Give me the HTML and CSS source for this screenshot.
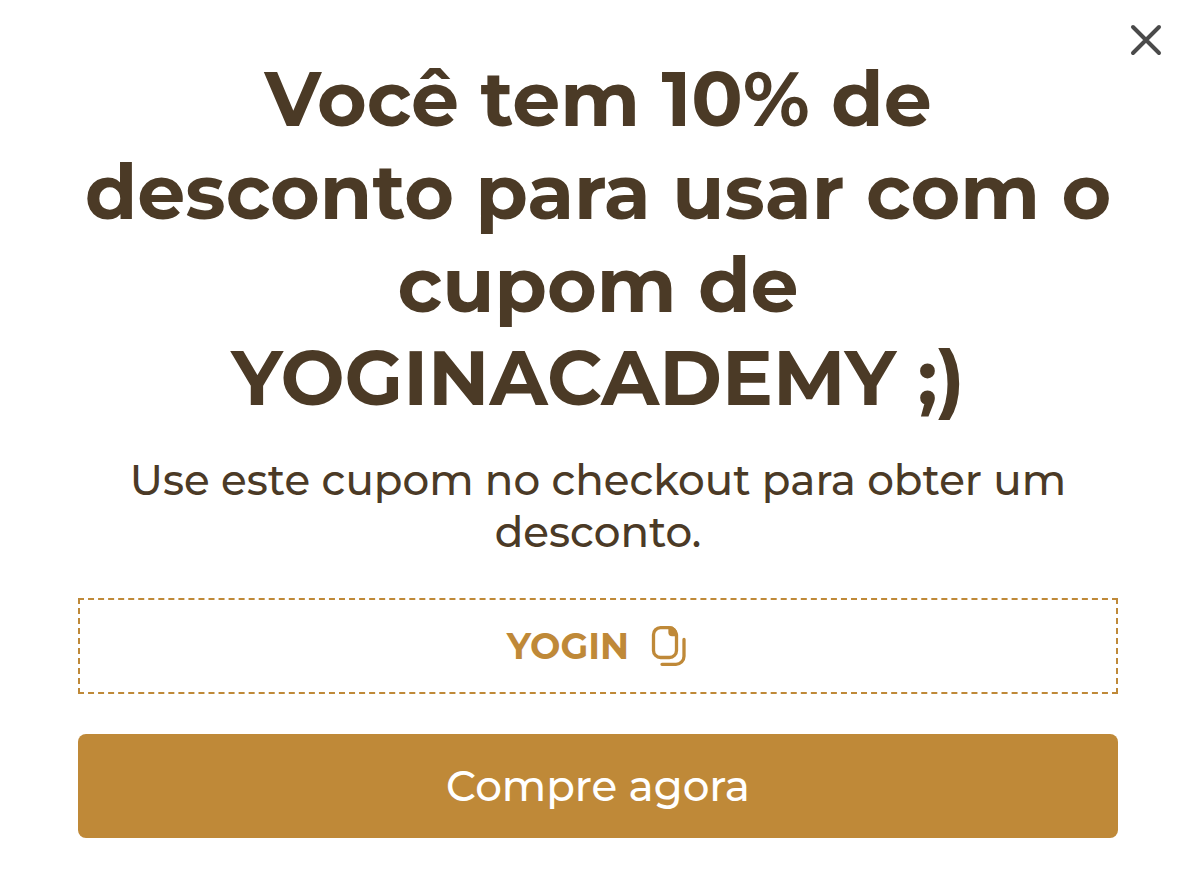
FILE: index.html
```
<!DOCTYPE html>
<html lang="pt-BR">
    <head>
        <meta charset="UTF-8">
        <meta name="viewport" content="width=device-width, initial-scale=1.0">
        <title>Cupom de desconto</title>
        <link rel="stylesheet" href="styles.css">
    </head>
    <body>
        <main class="popup">
            <button class="close" type="button" aria-label="Fechar">
                <svg viewBox="0 0 32 32" width="32" height="32" fill="none" stroke="#4a4a4a" stroke-width="4" stroke-linecap="round">
                    <path d="M3 3l26 26M29 3L3 29"/>
                </svg>
            </button>

            <h1>Você tem 10% de desconto para usar com o cupom de YOGINACADEMY ;)</h1>
            <p>Use este cupom no checkout para obter um desconto.</p>

            <button class="coupon" type="button">
                <span>YOGIN</span>
                <svg viewBox="0 0 38 42" width="38" height="42" fill="none" stroke="#bf8938" stroke-width="3.300" stroke-linecap="round" stroke-linejoin="round">
                    <path d="M9.500 2.700H18q3 0 5 2t2.500 5V25.500a7 7 0 0 1-7 7h-9a7 7 0 0 1-7-7V9.700a7 7 0 0 1 7-7z"/>
                    <path d="M19 3v4.500a2 2 0 0 0 2 2h4q0-2.500-2-4.500t-4-2z" fill="#bf8938"/>
                    <path d="M33 14.500V31.300a8 8 0 0 1-8 8H11"/>
                </svg>
            </button>

            <button class="buy" type="button">Compre agora</button>
        </main>
    </body>
</html>
```
FILE: styles.css
```
* {
    box-sizing: border-box;
}

body {
    font-family: Montserrat, Inter, sans-serif;
    text-align: center;
    background-color: #fff;
    color: #4b3a26;
    margin: 0;
}

button {
    font-family: inherit;
    cursor: pointer;
}

svg {
    display: block;
}

.popup {
    position: relative;
    display: flex;
    flex-direction: column;
    padding: 52px 68px 42px 78px;
}

.close {
    position: absolute;
    top: 24px;
    right: 24px;
    padding: 0;
    border: none;
    background: none;
}

h1 {
    font-size: 76px;
    line-height: 93px;
    font-weight: 700;
    margin: 0 0 30px;
}

p {
    font-size: 42px;
    line-height: 52px;
    font-weight: 500;
    margin: 0 0 40px;
}

.coupon {
    display: flex;
    justify-content: center;
    align-items: center;
    gap: 22px;
    height: 96px;
    margin-bottom: 40px;
    border: 2px dashed #bf8938;
    background: none;
    color: #bf8938;
    font-size: 36px;
    font-weight: 700;
}

.buy {
    height: 104px;
    border: none;
    border-radius: 8px;
    background-color: #bf8938;
    color: #fff;
    font-size: 42px;
    font-weight: 500;
}
```
